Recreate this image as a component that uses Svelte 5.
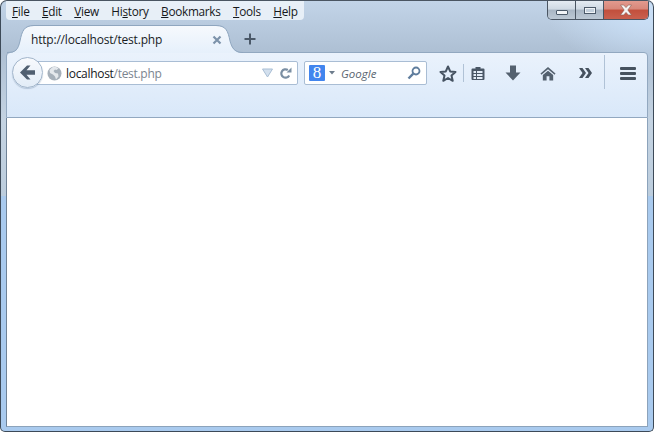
<script lang="ts">
  const menus = [
    { key: 'F', rest: 'ile' },
    { key: 'E', rest: 'dit' },
    { key: 'V', rest: 'iew' },
    { pre: 'Hi', key: 's', rest: 'tory' },
    { key: 'B', rest: 'ookmarks' },
    { key: 'T', rest: 'ools' },
    { key: 'H', rest: 'elp' },
  ];
</script>

<div class="window">
  <div class="titlebar">
    <nav class="menubar">
      {#each menus as m}
        <span class="menu">{m.pre ?? ''}<u>{m.key}</u>{m.rest}</span>
      {/each}
    </nav>
    <div class="caption">
      <div class="cap cap-min"><span class="min-glyph"></span></div>
      <div class="cap cap-max"><span class="max-glyph"></span></div>
      <div class="cap cap-close">
        <svg width="16" height="12" viewBox="0 0 16 12">
          <path d="M2.5 1h3.2L8 3.6 10.3 1h3.2L9.8 6l3.7 5h-3.2L8 8.4 5.7 11H2.500L6.200 6z" fill="#f4f4f4" stroke="#8a5a50" stroke-width=".6" />
        </svg>
      </div>
    </div>
  </div>

  <div class="tabstrip">
    <div class="tab">
      <svg class="tab-shape" width="236" height="28" viewBox="0 0 236 28">
        <defs>
          <linearGradient id="tabfill" x1="0" y1="0" x2="0" y2="1">
            <stop offset="0" stop-color="#f6f9fd" />
            <stop offset="1" stop-color="#e6f0fb" />
          </linearGradient>
        </defs>
        <path d="M0 28c9 0 11-3 13-12C15 6 17 1 27 1h182c10 0 12 5 14 15 2 8 5 12 13 12z" fill="url(#tabfill)" />
        <path d="M0 27.500c9 0 11-3 13-11.500C15 6 17 .5 27 .5h182c10 0 12 5.500 14 15.500 2 7.500 5 11.500 13 11.500" fill="none" stroke="#8fa6bf" />
      </svg>
      <span class="tab-title">http://localhost/test.php</span>
      <svg class="tab-close" width="10" height="10" viewBox="0 0 10 10">
        <path d="M1.500 1.500l7 7M8.500 1.500l-7 7" stroke="#7d93aa" stroke-width="2.200" />
      </svg>
    </div>
    <svg class="newtab" width="12" height="12" viewBox="0 0 12 12">
      <path d="M6 .5v11M.5 6h11" stroke="#4a5868" stroke-width="2" />
    </svg>
  </div>

  <div class="navbar">
    <div class="toolbar">
      <div class="back">
        <svg width="17" height="15" viewBox="0 0 17 15">
          <path d="M8 .5L1 7.500l7 7h3.500L7.500 9.800H16V5.200H7.500L11.500.5z" fill="#505f70" />
        </svg>
      </div>
      <div class="urlbar">
        <svg class="globe" width="15" height="15" viewBox="0 0 15 15">
          <circle cx="7.500" cy="7.500" r="7" fill="#a6b0ba" />
          <path d="M5 1.500c2-.8 5-.5 6.500 1L9.500 4 8 3.500 6.500 5 8 7l3 .5.500 3-2.500 3-1-3L6 8.500 3 7 2.500 4z" fill="#e4e8ec" />
        </svg>
        <span class="host">localhost</span><span class="path">/test.php</span>
        <span class="url-spacer"></span>
        <svg class="drop" width="13" height="10" viewBox="0 0 13 10">
          <path d="M1.500 1h10L6.500 9z" fill="#d3e0ee" stroke="#a9bed4" />
        </svg>
        <svg class="reload" width="13" height="13" viewBox="0 0 13 13">
          <path d="M10.200 8.500A4.200 4.200 0 1 1 8.800 3" fill="none" stroke="#7b8fa3" stroke-width="2.200" />
          <path d="M7.500 5.500L12.500 5.500V.5z" fill="#7b8fa3" />
        </svg>
      </div>
      <div class="searchbar">
        <div class="engine"><span>8</span></div>
        <svg class="engine-arrow" width="6" height="4" viewBox="0 0 6 4"><path d="M0 0h6L3 3.500z" fill="#6d7c8c" /></svg>
        <span class="placeholder">Google</span>
        <svg class="magnifier" width="14" height="14" viewBox="0 0 14 14">
          <circle cx="9" cy="5" r="3.500" fill="none" stroke="#5f7d9d" stroke-width="1.800" />
          <path d="M6.300 7.700L1.500 12.500" stroke="#5f7d9d" stroke-width="2.400" />
        </svg>
      </div>

      <div class="tool star">
        <svg width="18" height="17" viewBox="0 0 18 17">
          <path d="M9 1.500l2.200 4.900 5.300.6-4 3.500 1.200 5.300L9 13l-4.700 2.800 1.200-5.300-4-3.500 5.300-.6z" fill="none" stroke="#465362" stroke-width="2" stroke-linejoin="round" />
        </svg>
      </div>
      <span class="sep sep-short"></span>
      <div class="tool clip">
        <svg width="14" height="15" viewBox="0 0 14 15">
          <path d="M1.500 2.500h3V1h5v1.500h3a1 1 0 0 1 1 1V13a1 1 0 0 1-1 1h-11a1 1 0 0 1-1-1V3.500a1 1 0 0 1 1-1z" fill="#4a5766" />
          <path d="M2.500 5h9v2h-9zM2.500 8h9v2h-9zM2.500 11h9v2h-9z" fill="#e4edf8" />
          <path d="M5 4.500h1v9H5z" fill="#4a5766" />
        </svg>
      </div>
      <div class="tool down">
        <svg width="16" height="16" viewBox="0 0 16 16">
          <path d="M5 .5h6v7h4.500L8 15.500.5 7.500H5z" fill="#54616f" />
        </svg>
      </div>
      <div class="tool home">
        <svg width="17" height="15" viewBox="0 0 17 15">
          <path d="M8.500 .5L.5 7.500l1 1.200L8.500 3l7 5.700 1-1.200z" fill="#54616f" />
          <path d="M3 9L8.500 4.500 14 9v6H10V10.500H7V15H3z" fill="#54616f" />
        </svg>
      </div>
      <div class="tool more">
        <svg width="13" height="10" viewBox="0 0 13 10">
          <path d="M0 0h3.500L7 5 3.500 10H0L3.500 5zM6 0h3.500L13 5 9.500 10H6L9.500 5z" fill="#46525f" />
        </svg>
      </div>
      <span class="sep sep-tall"></span>
      <div class="tool burger">
        <span></span><span></span><span></span>
      </div>
    </div>
  </div>

  <main class="content"></main>
</div>

<style>
  :global(body) {
    margin: 0;
    background: #fff;
  }

  .window {
    width: 654px;
    height: 432px;
    box-sizing: border-box;
    display: flex;
    flex-direction: column;
    border: 1px solid #3d4a58;
    border-top-color: #4a5562;
    border-radius: 7px 7px 5px 5px;
    overflow: hidden;
    background:
      linear-gradient(to bottom, transparent 0, transparent 195px, #a9caee 195px, #a9caee 100%),
      radial-gradient(ellipse 110px 70px at 100% 0, #c9def5 30%, transparent 100%),
      linear-gradient(to bottom, #c2d4e8 0, #aec0d4 50px, #c4d3e2 120px, #bccddd 195px);
    font-family: "Open Sans", "Noto Sans", sans-serif;
  }

  .titlebar {
    height: 19px;
    flex: none;
    display: flex;
    justify-content: space-between;
    padding: 0 4px 0 5px;
  }

  .menubar {
    display: flex;
    align-items: center;
    height: 19px;
    width: 298px;
    box-sizing: border-box;
    padding-left: 6px;
    gap: 12.500px;
    background: rgba(238, 244, 250, 0.85);
    border-radius: 0 0 4px 4px;
    font-size: 11.800px;
    color: #16181b;
  }

  .menu {
    white-space: nowrap;
    letter-spacing: -0.3px;
  }

  .caption {
    display: flex;
    height: 19px;
    border: 1px solid #4a5562;
    border-top: none;
    border-radius: 0 0 5px 5px;
    overflow: hidden;
    box-sizing: border-box;
    width: 102px;
  }

  .cap {
    display: flex;
    align-items: center;
    justify-content: center;
    height: 100%;
  }

  .cap-min,
  .cap-max {
    background: linear-gradient(to bottom, #e4ebf2 0, #cfd9e3 45%, #a9b6c4 50%, #bcc8d4 100%);
    border-right: 1px solid #4a5562;
    width: 27px;
    flex: none;
  }

  .cap-close {
    flex: 1;
    background: linear-gradient(to bottom, #e29a8e 0, #d8877a 45%, #c24f3c 50%, #c9604e 100%);
  }

  .min-glyph {
    width: 10px;
    height: 3px;
    margin-top: 5px;
    background: #f2f5f8;
    border: 1px solid #4c5a69;
    border-radius: 1px;
  }

  .max-glyph {
    width: 4px;
    height: 1px;
    background: #c4d0dc;
    border: 1px solid #f0f3f6;
    outline: 1px solid #4c5a69;
    padding: 1px 2px;
  }

  .tabstrip {
    flex: none;
    height: 32px;
    display: flex;
    align-items: flex-end;
    padding-left: 6px;
    position: relative;
  }

  .tab {
    width: 236px;
    height: 28px;
    position: relative;
    display: flex;
    align-items: center;
    padding: 0 0 0 24px;
    box-sizing: border-box;
    z-index: 1;
    margin-bottom: -1px;
  }

  .tab-shape {
    position: absolute;
    left: 0;
    top: 0;
  }

  .tab-title {
    position: relative;
    font-size: 12px;
    color: #1a1c1f;
    letter-spacing: -0.2px;
    white-space: nowrap;
  }

  .tab-close {
    position: absolute;
    left: 205px;
    top: 10px;
  }

  .newtab {
    margin: 0 0 7px 1px;
  }

  .navbar {
    flex: none;
    height: 66px;
    margin: 0 5px;
    box-sizing: border-box;
    border: 1px solid #92a8c0;
    border-radius: 4px 4px 0 0;
    background: linear-gradient(to bottom, #eaf2fc 0, #d9e8f9 100%);
  }

  .toolbar {
    display: flex;
    align-items: flex-start;
    padding: 8px 0 0 5px;
    height: 34px;
    position: relative;
  }

  .back {
    width: 31px;
    height: 31px;
    flex: none;
    box-sizing: border-box;
    border-radius: 50%;
    border: 1px solid #a3b6cb;
    background: linear-gradient(to bottom, #f8fafd, #e2ecf7);
    display: flex;
    align-items: center;
    justify-content: center;
    z-index: 1;
    margin-top: -4px;
    box-shadow: 0 1px 1px rgba(110, 135, 165, 0.4);
  }

  .urlbar {
    width: 272px;
    height: 24px;
    box-sizing: border-box;
    margin-left: -17px;
    padding: 0 5px 0 20px;
    flex: none;
    display: flex;
    align-items: center;
    background: #fff;
    border: 1px solid #a9bdd4;
    border-radius: 2px;
    font-size: 12px;
  }

  .globe {
    flex: none;
    margin-right: 4px;
  }

  .host {
    color: #17191c;
    letter-spacing: -0.3px;
  }

  .path {
    color: #7b8590;
    letter-spacing: -0.3px;
  }

  .url-spacer {
    flex: 1;
  }

  .drop {
    margin-right: 5px;
  }

  .searchbar {
    width: 123px;
    height: 24px;
    box-sizing: border-box;
    margin-left: 6px;
    padding: 0 5px 0 4px;
    flex: none;
    display: flex;
    align-items: center;
    background: #fff;
    border: 1px solid #a9bdd4;
    border-radius: 2px;
  }

  .engine {
    width: 16px;
    height: 16px;
    background: #4285ee;
    border-radius: 1px;
    color: #fff;
    font: 17px/16px "Liberation Serif", serif;
    text-align: center;
    flex: none;
  }

  .engine-arrow {
    margin-left: 4px;
    flex: none;
  }

  .placeholder {
    margin-left: 6px;
    flex: 1;
    font-style: italic;
    font-size: 11.500px;
    color: #5a6570;
  }

  .tool {
    flex: none;
    display: flex;
    align-items: center;
    justify-content: center;
    height: 24px;
  }

  .star {
    margin-left: 12px;
    width: 18px;
  }

  .sep {
    flex: none;
    width: 1px;
    background: #b0c2d6;
  }

  .sep-short {
    height: 18px;
    margin: 3px 0 0 6px;
  }

  .clip {
    margin-left: 7px;
    width: 14px;
  }

  .down {
    margin-left: 20px;
    width: 16px;
  }

  .home {
    margin-left: 19px;
    width: 16px;
  }

  .more {
    margin-left: 23px;
    width: 13px;
  }

  .sep-tall {
    height: 34px;
    margin: -6px 0 0 12px;
  }

  .burger {
    margin-left: 15px;
    width: 16px;
    flex-direction: column;
    gap: 2px;
  }

  .burger span {
    display: block;
    width: 16px;
    height: 3px;
    background: #46525f;
    border-radius: 1px;
  }

  .content {
    flex: none;
    height: 308px;
    margin: 0 5px 0 5px;
    background: #fff;
    border: 1px solid #8ca3bb;
    border-top: none;
    border-left-color: #6f8296;
  }
</style>
